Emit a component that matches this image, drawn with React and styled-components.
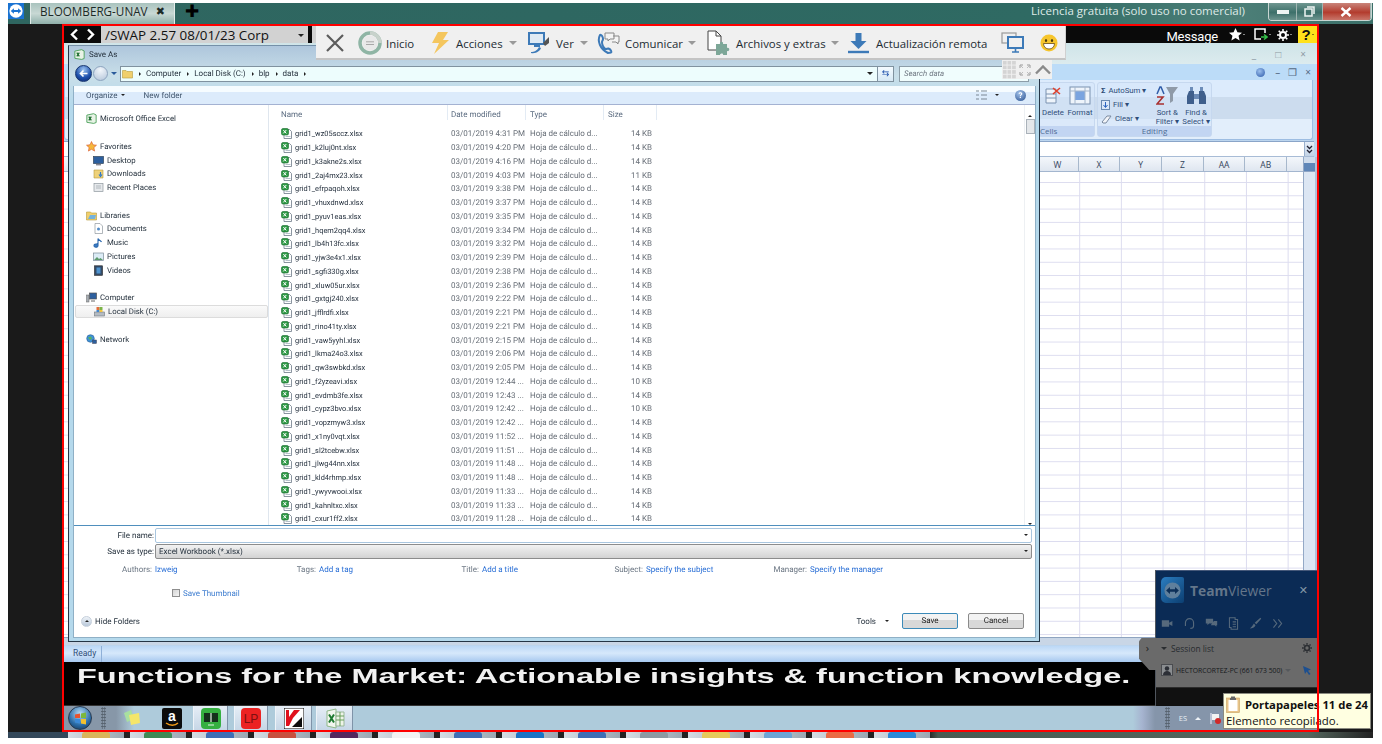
import React from 'react';
import styled, { createGlobalStyle } from 'styled-components';

// --- data ---
const files = [
  ['wz05sccz', '4:31 PM', 14], ['k2luj0nt', '4:20 PM', 14], ['k3akne2s', '4:16 PM', 14], ['2aj4mx23', '4:03 PM', 11],
  ['efrpaqoh', '3:38 PM', 14], ['vhuxdnwd', '3:37 PM', 14], ['pyuv1eas', '3:35 PM', 14], ['hqem2qq4', '3:34 PM', 14],
  ['lb4h13fc', '3:32 PM', 14], ['yjw3e4x1', '2:39 PM', 14], ['sgfi330g', '2:38 PM', 14], ['xluw05ur', '2:36 PM', 14],
  ['gxtgj240', '2:22 PM', 14], ['jfflrdfi', '2:21 PM', 14], ['rino41ty', '2:21 PM', 14], ['vaw5yyhl', '2:15 PM', 14],
  ['lkma24o3', '2:06 PM', 14], ['qw3swbkd', '2:05 PM', 14], ['f2yzeavi', '12:44 ...', 10], ['evdmb3fe', '12:43 ...', 14],
  ['cypz3bvo', '12:42 ...', 10], ['vopzmyw3', '12:42 ...', 14], ['x1ny0vqt', '11:52 ...', 14], ['sl2tcebw', '11:51 ...', 14],
  ['jlwg44nn', '11:48 ...', 14], ['kld4rhmp', '11:48 ...', 14], ['ywyvwooi', '11:33 ...', 14], ['kahnltxc', '11:33 ...', 14],
  ['cxur1ff2', '11:28 ...', 14],
];

const bottomTabs = ['#d9b45a', '#3f8a55', '#3f6fb5', '#c8503f', '#54285e', '#f2f2f2', '#3f6fb5', '#1b74c4', '#3f6fb5', '#8d9aa2', '#e6c95a', '#6ea5d4', '#ea6b45', '#2b8ad8'];
const columns = ['W', 'X', 'Y', 'Z', 'AA', 'AB'];

// --- global ---
const Global = createGlobalStyle`
  html, body { margin: 0; background: #fff; overflow: hidden; }
  * { box-sizing: border-box; }
  body { font-family: "Open Sans", "Liberation Sans", sans-serif; }
`;

// --- outer remote window ---
const Screen = styled.div`
  position: relative;
  margin: 3px 0 0 8px;
  width: 1365px;
  height: 735px;
  background: #1a1a1a;
  display: flex;
  flex-direction: column;
`;

const TitleBar = styled.div`
  height: 21px;
  flex: none;
  display: flex;
  align-items: center;
  background: linear-gradient(90deg, #2f6660 0%, #2e6761 40%, #2f6a63 75%, #4d7f78 90%, #3a6f68 100%);
  color: #10201e;
`;

const AppLogo = styled.div`
  width: 16px;
  height: 16px;
  align-self: flex-start;
  background: #1a73d2;
  display: flex;
  align-items: center;
  justify-content: center;
`;

const SessionTab = styled.div`
  margin-left: 6px;
  width: 145px;
  height: 21px;
  padding: 0 0 5px 9px;
  display: flex;
  align-items: center;
  justify-content: space-between;
  background: linear-gradient(180deg, #a9c3be, #c8d8d4 50%, #8fb0aa);
  border-left: 1px solid #e3ecea;
  border-right: 1px solid #e3ecea;
  color: #1c2a28;
  font-size: 11.7px;
`;

const TabClose = styled.span`
  font-family: "DejaVu Sans", sans-serif;
  font-weight: 700;
  font-size: 11px;
  margin-right: 9px;
`;

const NewTab = styled.span`
  margin: 0 0 5px 10px;
  font-family: "DejaVu Sans", sans-serif;
  font-weight: 700;
  font-size: 17px;
  color: #000;
`;

const LicenseText = styled.span`
  margin: 0 0 7px auto;
  color: #dfeae8;
  font-size: 11.5px;
  white-space: nowrap;
`;

const WindowButtons = styled.div`
  margin: 0 1px 0 23px;
  width: 104px;
  height: 18px;
  display: flex;
  align-self: flex-start;
  border: 1px solid #c8d6d3;
  border-top: 0;
  border-radius: 0 0 4px 4px;
  overflow: hidden;
`;

const WinButton = styled.div`
  width: ${p => p.$w}px;
  display: flex;
  align-items: center;
  justify-content: center;
  border-right: 1px solid #9fb5b1;
  background: ${p => p.$close ? 'linear-gradient(180deg, #c9847a, #b33c2e 55%, #c9766a)' : 'linear-gradient(180deg, #6f9690, #3d706a 55%, #6b938d)'};
  color: #fff;
`;

const FrameRow = styled.div`
  height: 708px;
  flex: none;
  padding-left: 54px;
`;

const Frame = styled.div`
  position: relative;
  width: 1257px;
  height: 708px;
  border: 2px solid #fe0000;
  display: flex;
  flex-direction: column;
`;

// --- bloomberg bar ---
const BbgBar = styled.div`
  height: 17px;
  flex: none;
  background: #0a0a0a;
  display: flex;
  align-items: center;
  color: #fff;
`;

const NavArrows = styled.div`
  width: 37px;
  display: flex;
  justify-content: space-around;
  padding: 0 3px;
`;

const CommandBox = styled.div`
  width: 207px;
  height: 17px;
  padding: 2px 4px 0;
  background: #d2d2d2;
  color: #111;
  font-size: 13.4px;
  line-height: 15px;
  display: flex;
  justify-content: space-between;
  align-items: center;
  white-space: nowrap;
  overflow: hidden;
`;

const SmallCaret = styled.span`
  width: 0;
  height: 0;
  border: ${p => p.$s || 3}px solid transparent;
  border-top-color: ${p => p.$c || '#222'};
  border-bottom-width: 0;
  flex: none;
`;

const SecondBox = styled(CommandBox)`
  width: 20px;
  margin-left: 4px;
`;

const BbgRight = styled.div`
  margin-left: auto;
  display: flex;
  align-items: center;
  height: 17px;
`;

const MessageLabel = styled.span`
  font-family: Roboto, sans-serif;
  font-size: 13px;
  letter-spacing: -0.2px;
  margin: 3px 11px 0 0;
`;

const BbgIcon = styled.div`
  width: ${p => p.$w}px;
  display: flex;
  align-items: center;
  gap: 1px;
`;

const HelpButton = styled.div`
  width: 19px;
  height: 17px;
  background: #ffe11a;
  color: #111;
  font-family: "Liberation Sans", sans-serif;
  font-weight: 700;
  font-size: 15px;
  display: flex;
  align-items: center;
  justify-content: center;
  gap: 1px;
`;

// --- excel behind the dialog ---
const ExcelWindow = styled.div`
  flex: 1;
  min-height: 0;
  display: flex;
  flex-direction: column;
  background: #bcd5ee;
`;

const ExcelTitle = styled.div`
  height: 21px;
  flex: none;
  display: flex;
  justify-content: flex-end;
  gap: 19px;
  padding: 4px 11px 0 0;
  background: linear-gradient(180deg, #cfe4e8, #dcebee);
  color: #8d9aa4;
  font-size: 10px;
`;

const RibbonTabs = styled.div`
  height: 16px;
  flex: none;
  display: flex;
  justify-content: flex-end;
  align-items: center;
  gap: 8px;
  padding-right: 6px;
  background: #bcdcf8;
  color: #556a85;
  font-size: 10px;
`;

const HelpDot = styled.span`
  width: 9px;
  height: 9px;
  border-radius: 50%;
  background: radial-gradient(circle at 40% 35%, #9cc0ee, #2a58a8);
  margin-right: 2px;
`;

const Ribbon = styled.div`
  height: 60px;
  flex: none;
  margin-right: 4px;
  padding: 2px 0 0 973px;
  display: flex;
  gap: 2px;
  background: linear-gradient(180deg, #dcebfc 0 28%, #ccdcee 28% 66%, #e2eefb 66%);
  border: 1px solid #9dbde2;
  border-top: 0;
  border-radius: 0 0 3px 3px;
`;

const RibbonGroup = styled.div`
  width: ${p => p.$w}px;
  height: 55px;
  display: flex;
  flex-direction: column;
  border-radius: 3px;
  background: rgba(214, 230, 250, 0.55);
  border: 1px solid #c6d8ef;
`;

const GroupBody = styled.div`
  flex: 1;
  display: flex;
  gap: 5px;
  padding: 3px 3px 0;
`;

const GroupLabel = styled.div`
  height: 10px;
  background: #c2d5f2;
  color: #4f6d95;
  font-size: 8px;
  line-height: 10px;
  text-align: ${p => p.$left ? 'left' : 'center'};
  padding-left: ${p => p.$left ? '1px' : '0'};
`;

const BigTool = styled.div`
  width: ${p => p.$w || 22}px;
  display: flex;
  flex-direction: column;
  align-items: center;
  color: #2f4d78;
  font-family: Roboto, sans-serif;
  font-size: 7.8px;
  line-height: 9px;
  text-align: center;
  white-space: nowrap;
  gap: 3px;
`;

const SmallTools = styled.div`
  width: 52px;
  display: flex;
  flex-direction: column;
  gap: 4px;
  color: #2f4d78;
  font-family: Roboto, sans-serif;
  font-size: 7.8px;
  line-height: 10px;
`;

const SmallTool = styled.div`
  display: flex;
  align-items: center;
  gap: 3px;
  white-space: nowrap;
`;

const FormulaBar = styled.div`
  height: 16px;
  flex: none;
  margin: 1px 3px 0 0;
  display: flex;
  justify-content: flex-end;
  background: #fff;
  border-top: 1px solid #8aa5c8;
  border-bottom: 1px solid #a8bcd6;
`;

const FormulaToggle = styled.div`
  width: 10px;
  display: flex;
  align-items: center;
  justify-content: center;
  background: linear-gradient(180deg, #e6eef8, #c3d3e6);
  border-left: 1px solid #9ab0cc;
`;

const SheetRow = styled.div`
  flex: 1;
  min-height: 0;
  display: flex;
  background: #fff;
`;

const Sheet = styled.div`
  flex: 1;
  display: flex;
  flex-direction: column;
  min-width: 0;
`;

const ColumnHeader = styled.div`
  height: 15px;
  flex: none;
  padding-left: 973px;
  display: flex;
  background: linear-gradient(180deg, #f4f7fb, #dfe6f0);
  border-bottom: 1px solid #a3b6cf;
`;

const ColumnCell = styled.div`
  width: 41.7px;
  border-right: 1px solid #a7b8cc;
  text-align: center;
  color: #33445c;
  font-size: 8.5px;
  line-height: 15px;
`;

const Cells = styled.div`
  flex: 1;
  background-color: #fff;
  background-image:
    linear-gradient(90deg, #dcdcef 1px, transparent 1px),
    linear-gradient(180deg, #dcdcef 1px, transparent 1px);
  background-size: 41.7px 13.3px;
  background-position: 14.7px 10px;
`;

const SheetTabs = styled.div`
  height: 8px;
  flex: none;
  background: #c9d6e6;
  border-top: 1px solid #8ea4c0;
`;

const SheetScroll = styled.div`
  width: 14px;
  flex: none;
  border-left: 1px solid #94a9c6;
  border-right: 2px solid #b0c2da;
  background: #dce6f3;
  display: flex;
  flex-direction: column;
`;

const ScrollCap = styled.div`
  height: 15px;
  background: linear-gradient(180deg, #cfdcec 0 40%, #5f86b8 40% 100%);
  border-bottom: 1px solid #8ca3c4;
`;

const StatusBar = styled.div`
  height: 16px;
  flex: none;
  margin-top: 1px;
  background: linear-gradient(180deg, #bcd8f6, #d6e8fb 45%, #a7c8ef);
  color: #2f4d78;
  font-family: Roboto, sans-serif;
  font-size: 8.5px;
  line-height: 15px;
`;

const StatusCell = styled.span`
  display: inline-block;
  padding: 0 5px 0 9px;
  border-right: 1px solid #8fb0d8;
  height: 16px;
`;

// --- ticker and taskbar ---
const Ticker = styled.div`
  height: 44px;
  flex: none;
  background: #000;
  border-bottom: 1px solid #333;
  color: #f1f1f1;
  font-family: "Liberation Sans", sans-serif;
  font-weight: 700;
  font-size: 20px;
  line-height: 29px;
  padding-left: 13px;
  white-space: nowrap;
  overflow: hidden;
`;

const TickerText = styled.span`
  display: inline-block;
  transform: scaleX(1.625);
  transform-origin: 0 50%;
  filter: blur(0.3px);
`;

const Taskbar = styled.div`
  height: 24px;
  flex: none;
  display: flex;
  align-items: center;
  background: linear-gradient(90deg, #8797a8 0, #8797a8 52px, #aecbdb 70px, #aecbdb 1069px, #a6b4d0 1078px, #8595aa 1091px);
  padding-left: 4px;
  color: #e8eef4;
`;

const Orb = styled.div`
  width: 24px;
  height: 24px;
  border-radius: 50%;
  flex: none;
  border: 1px solid #283a50;
  background: radial-gradient(circle at 50% 30%, #b8dcf5, #2a6ca8 60%, #16304c);
  display: flex;
  align-items: center;
  justify-content: center;
`;

const Grip = styled.div`
  width: 5px;
  height: 22px;
  flex: none;
  margin-left: ${p => p.$ml}px;
  background-image: radial-gradient(#55606c 0.8px, transparent 1px);
  background-size: 2.5px 3px;
`;

const TaskSlot = styled.div`
  width: ${p => p.$w}px;
  height: 24px;
  flex: none;
  margin-left: ${p => p.$ml || 0}px;
  display: flex;
  align-items: center;
  justify-content: center;
  background: ${p => p.$on ? 'linear-gradient(180deg, #e6eef6, #c6d6e6)' : 'transparent'};
  border-left: ${p => p.$on ? '1px solid #eef3f8' : '0'};
  border-right: ${p => p.$on ? '1px solid #7f93a8' : '0'};
`;

const TrayText = styled.span`
  margin-left: 9px;
  font-size: 7.5px;
`;

const TrayUp = styled.span`
  margin-left: 8px;
  width: 0;
  height: 0;
  border: 3.5px solid transparent;
  border-bottom-color: #eef2f6;
  border-top-width: 0;
`;

const TrayFlag = styled.div`
  margin-left: 8px;
  display: flex;
`;

const TaskFill = styled.div`
  flex: 1;
`;

const BottomStrip = styled.div`
  height: 6px;
  flex: none;
  overflow: hidden;
  padding-left: 60px;
  display: flex;
  gap: 6px;
  background: linear-gradient(90deg, #33485a 0 60px, #222 60px 920px, #4a5c52 930px, #56685f 1300px, #222);
`;

const StripTab = styled.div`
  width: 56px;
  flex: none;
  display: flex;
  justify-content: center;
  background: linear-gradient(90deg, #d5dde4, #9aa7b2);
  &::before {
    content: '';
    width: 28px;
    height: 6px;
    border-radius: 3px 3px 0 0;
    background: ${p => p.$c};
  }
`;

// --- save as dialog ---
const Dialog = styled.div`
  position: absolute;
  left: 4px;
  top: 19px;
  width: 972px;
  height: 597px;
  padding: 0 3px 3px 4px;
  display: flex;
  flex-direction: column;
  background: linear-gradient(180deg, #aec6dc 0, #c9dfe9 30px, #b5d9ec 60px);
  border: 1px solid #253545;
  border-top-color: #7590a8;
  font-family: Roboto, sans-serif;
  text-rendering: geometricPrecision;
  filter: blur(0.25px);
  z-index: 2;
`;

const DialogTitle = styled.div`
  height: 17px;
  flex: none;
  display: flex;
  align-items: center;
  gap: 4px;
  padding-left: 1px;
  color: #26323e;
  font-size: 8px;
`;

const AddressRow = styled.div`
  height: 21px;
  flex: none;
  display: flex;
  align-items: center;
`;

const NavButton = styled.div`
  width: ${p => p.$s}px;
  height: ${p => p.$s}px;
  margin-left: ${p => p.$ml || 0}px;
  flex: none;
  border-radius: 50%;
  border: 1px solid ${p => p.$on ? '#17356f' : '#8da4bf'};
  background: ${p => p.$on ? 'radial-gradient(circle at 50% 25%, #9cc4f2, #1c4eaa 60%, #102c70)' : 'radial-gradient(circle at 50% 25%, #f2f6fb, #b2c4d9)'};
  display: flex;
  align-items: center;
  justify-content: center;
  color: #fff;
`;

const HistoryCaret = styled(SmallCaret)`
  margin-left: 3px;
`;

const AddressField = styled.div`
  margin-left: 3px;
  width: 758px;
  height: 16px;
  padding: 0 4px 0 1px;
  display: flex;
  align-items: center;
  gap: 5px;
  background: #edfdfd;
  border: 1px solid #80929f;
  color: #26323e;
  font-size: 8px;
  white-space: nowrap;
`;

const Crumb = styled.span`
  width: 0;
  height: 0;
  border: 2.5px solid transparent;
  border-left-color: #222;
  border-right-width: 0;
  margin-left: 1px;
`;

const CaretEnd = styled(SmallCaret)`
  margin-left: auto;
`;

const RefreshButton = styled.div`
  width: 16px;
  height: 16px;
  background: linear-gradient(180deg, #f4fbff, #d6e8f4);
  border: 1px solid #80929f;
  border-left: 0;
  display: flex;
  align-items: center;
  justify-content: center;
  color: #1c4eaa;
  font-size: 9px;
`;

const SearchField = styled.div`
  margin-left: 5px;
  width: 130px;
  height: 16px;
  padding-left: 4px;
  background: #f0fdfd;
  border: 1px solid #8c9da8;
  font-style: italic;
  color: #6d7680;
  font-size: 7.8px;
  line-height: 14px;
`;

const Client = styled.div`
  flex: 1;
  min-height: 0;
  margin-top: 2px;
  background: #fff;
  display: flex;
  flex-direction: column;
  border: 1px solid #8fb0c6;
  border-top: 0;
`;

const DialogToolbar = styled.div`
  height: 19px;
  flex: none;
  padding: 0 9px 0 12px;
  display: flex;
  align-items: center;
  gap: 19px;
  background: linear-gradient(180deg, #f6fcff 0 35%, #dcebfb 35%);
  border-bottom: 1px solid #a4b2d2;
  color: #41566e;
  font-size: 8px;
`;

const OrganizeLabel = styled.span`
  display: flex;
  align-items: center;
  gap: 3px;
`;

const ViewIcons = styled.div`
  margin-left: auto;
  display: flex;
  align-items: center;
  gap: 8px;
`;

const HelpIcon = styled.span`
  width: 11px;
  height: 11px;
  margin-left: 8px;
  border-radius: 50%;
  background: radial-gradient(circle at 40% 30%, #a2c2ea, #29508f);
  color: #fff;
  font-size: 8px;
  font-weight: 700;
  line-height: 11px;
  text-align: center;
`;

const BrowseArea = styled.div`
  flex: 1;
  min-height: 0;
  display: flex;
  border-bottom: 1px solid #4f8fbd;
`;

const Sidebar = styled.div`
  width: 195px;
  flex: none;
  padding: 7px 0 0 1px;
  border-right: 1px solid #dfe6ee;
  display: flex;
  flex-direction: column;
  gap: 14px;
`;

const SideGroup = styled.div`
  display: flex;
  flex-direction: column;
`;

const SideItem = styled.div`
  height: 13.7px;
  padding-left: ${p => p.$sub ? 18 : 11}px;
  display: flex;
  align-items: center;
  gap: 3px;
  color: #26323e;
  font-size: 7.8px;
  white-space: nowrap;
  border: ${p => p.$sel ? '1px solid #dcdcdc' : '0'};
  border-radius: 2px;
  background: ${p => p.$sel ? 'linear-gradient(180deg, #fafafa, #efefef)' : 'transparent'};
`;

const FileArea = styled.div`
  flex: 1;
  min-width: 0;
  position: relative;
  display: flex;
`;

const FilePane = styled.div`
  flex: 1;
  min-width: 0;
  padding-left: 12px;
  overflow: hidden;
`;

const HeaderRow = styled.div`
  height: 15px;
  display: flex;
  color: #5c6c80;
  font-size: 8px;
  line-height: 20px;
  margin-bottom: 7px;
`;

const HeaderCell = styled.div`
  width: ${p => p.$w}px;
  padding-left: ${p => p.$pl || 0}px;
  height: 15px;
  border-right: 1px solid #e3ebf4;
`;

const FileRow = styled.div`
  height: 13.75px;
  display: flex;
  align-items: center;
  font-size: 8px;
  color: #666d76;
  white-space: nowrap;
`;

const FileName = styled.div`
  width: 170px;
  display: flex;
  align-items: center;
  gap: 3px;
  color: #1e2a38;
  font-size: 7.4px;
`;

const FileCol = styled.div`
  width: ${p => p.$w}px;
  text-align: ${p => p.$right ? 'right' : 'left'};
`;

const FileScroll = styled.div`
  width: 11px;
  flex: none;
  padding-top: 10px;
  background: #fff;
  border-left: 1px solid #edf0f3;
  display: flex;
  flex-direction: column;
  align-items: center;
  justify-content: space-between;
`;

const ScrollThumb = styled.div`
  width: 9px;
  height: 15px;
  margin-bottom: auto;
  margin-top: 2px;
  background: #e4e7ea;
  border: 1px solid #aab2ba;
`;

const UpCaret = styled.span`
  width: 0;
  height: 0;
  border: 2.5px solid transparent;
  border-bottom-color: #222;
  border-top-width: 0;
`;

const SaveForm = styled.div`
  height: 111px;
  flex: none;
  padding: 1px 3px 0 0;
  display: flex;
  flex-direction: column;
`;

const FormRow = styled.div`
  height: 16px;
  flex: none;
  display: flex;
  align-items: center;
  font-size: 8px;
  color: #26323e;
`;

const FormLabel = styled.div`
  width: 81px;
  text-align: right;
  padding-right: 1px;
  white-space: nowrap;
`;

const NameInput = styled.div`
  flex: 1;
  height: 15px;
  padding: 0 3px;
  display: flex;
  align-items: center;
  background: ${p => p.$select ? 'linear-gradient(180deg, #f2f2f2, #d3d3d3)' : '#fff'};
  border: 1px solid ${p => p.$select ? '#8c8c8c' : '#a9c6df'};
  border-radius: 2px;
`;

const MetaRow = styled.div`
  margin-top: 3px;
  height: 14px;
  flex: none;
  display: flex;
  align-items: center;
  font-size: 8px;
  color: #6b7683;
  white-space: nowrap;
`;

const MetaItem = styled.div`
  width: ${p => p.$w}px;
  text-align: right;
  padding-right: 3px;
`;

const MetaLink = styled.div`
  width: ${p => p.$w}px;
  color: #2a6fd6;
`;

const ThumbRow = styled.div`
  margin-top: 10px;
  padding-left: 98px;
  height: 14px;
  flex: none;
  display: flex;
  align-items: center;
  gap: 3px;
  font-size: 8px;
  color: #3f7ed0;
`;

const ThumbBox = styled.span`
  width: 8px;
  height: 8px;
  background: linear-gradient(135deg, #d4d4d4, #f4f4f4);
  border: 1px solid #8e8e8e;
`;

const ActionRow = styled.div`
  margin-top: auto;
  height: 24px;
  flex: none;
  padding: 0 8px 8px 7px;
  display: flex;
  align-items: center;
  font-size: 8px;
  color: #26323e;
`;

const HideButton = styled.span`
  width: 11px;
  height: 11px;
  margin-right: 3px;
  border-radius: 50%;
  background: linear-gradient(180deg, #eef3f8, #b9c8da);
  border: 1px solid #c6d0dc;
  display: flex;
  align-items: center;
  justify-content: center;
`;

const ToolsLabel = styled.span`
  margin-left: auto;
  display: flex;
  align-items: center;
  gap: 9px;
  margin-right: 13px;
`;

const DialogButton = styled.div`
  width: 56px;
  height: 16px;
  margin-left: ${p => p.$ml || 0}px;
  text-align: center;
  line-height: 14px;
  border-radius: 2px;
  border: 1px solid ${p => p.$primary ? '#3c8ab8' : '#8a8a8a'};
  background: linear-gradient(180deg, #f3f3f3 0 45%, #d8d8d8 45%);
  color: #222;
`;

// --- teamviewer floating toolbar ---
const TvToolbar = styled.div`
  position: absolute;
  left: 252px;
  top: 0;
  width: 750px;
  height: 34px;
  padding-top: 2px;
  display: flex;
  align-items: center;
  background: #f0f0f0;
  border-right: 1px solid #d0d0d0;
  border-bottom: 2px solid #c4c4c4;
  color: #222c33;
  font-size: 11.4px;
  z-index: 3;
`;

const ToolItem = styled.div`
  width: ${p => p.$w}px;
  flex: none;
  padding-left: ${p => p.$pl || 0}px;
  display: flex;
  align-items: center;
  gap: ${p => p.$gap || 5}px;
  white-space: nowrap;
`;

const TvTab = styled.div`
  position: absolute;
  left: 938px;
  top: 34px;
  width: 50px;
  height: 19px;
  display: flex;
  align-items: center;
  background: #f0f0f0;
  z-index: 3;
`;

const TvGrip = styled.div`
  width: 14px;
  height: 19px;
  background-color: #d4d4d4;
  background-image:
    linear-gradient(90deg, #f0f0f0 1px, transparent 1px),
    linear-gradient(180deg, #f0f0f0 1px, transparent 1px);
  background-size: 4.6px 4.6px;
`;

const TvTabIcon = styled.div`
  width: 18px;
  display: flex;
  justify-content: center;
`;

// --- teamviewer panel ---
const TvPanel = styled.div`
  position: absolute;
  left: 1091px;
  top: 544px;
  width: 162px;
  height: 136px;
  display: flex;
  flex-direction: column;
  border-left: 1px solid #50565e;
  z-index: 3;
`;

const PanelHead = styled.div`
  height: 68px;
  flex: none;
  padding: 5px 9px 0 5px;
  background: #0b2b55;
  border-top: 1px solid #46597a;
`;

const PanelBrand = styled.div`
  display: flex;
  align-items: center;
  height: 28px;
  color: #64768a;
  font-size: 13.8px;
`;

const BrandLogo = styled.div`
  width: 23px;
  height: 26px;
  margin-right: 6px;
  background: linear-gradient(135deg, #2b7dc0, #0c3f72);
  border-radius: 5px 2px 2px 5px;
  display: flex;
  align-items: center;
  justify-content: center;
`;

const BrandBold = styled.span`
  font-weight: 700;
`;

const BrandClose = styled.span`
  margin-left: auto;
  font-family: "DejaVu Sans", sans-serif;
  font-weight: 700;
  font-size: 11px;
  color: #8497a8;
`;

const PanelIcons = styled.div`
  margin-top: 13px;
  display: flex;
  align-items: center;
  gap: 9px;
  color: #56697c;
`;

const PanelBody = styled.div`
  height: 49px;
  flex: none;
  position: relative;
  padding: 3px 5px 0 5px;
  background: #6a6a6a;
  color: #1d2125;
`;

const PanelHandle = styled.div`
  position: absolute;
  left: -17px;
  top: 0;
  width: 17px;
  height: 32px;
  background: #6a6a6a;
  clip-path: polygon(15% 0, 100% 0, 100% 100%, 60% 100%, 0 65%, 0 10%);
  color: #222;
  font-size: 11px;
  line-height: 20px;
  text-align: center;
`;

const SessionHead = styled.div`
  height: 14px;
  display: flex;
  align-items: center;
  gap: 4px;
  font-size: 8.4px;
  color: #272b2f;
`;

const SessionRow = styled.div`
  margin-top: 8px;
  height: 14px;
  display: flex;
  align-items: center;
  gap: 3px;
  font-size: 6.8px;
  white-space: nowrap;
  color: #15181b;
`;

const Avatar = styled.div`
  width: 12px;
  height: 12px;
  flex: none;
  background: #8a8d90;
  border: 1px solid #4a4c50;
  display: flex;
  align-items: flex-end;
  justify-content: center;
`;

const PushRight = styled.span`
  margin-left: auto;
  display: flex;
`;

const PanelFoot = styled.div`
  flex: 1;
  background: #111;
  border-top: 1px solid #2c2c2c;
`;

// --- clipboard tooltip ---
const Tooltip = styled.div`
  position: absolute;
  left: 1159px;
  top: 667px;
  width: 148px;
  height: 36px;
  padding: 2px 0 0 2px;
  background: #ffffe1;
  border: 1px solid #8a8a80;
  color: #111;
  font-size: 11.4px;
  line-height: 15px;
  white-space: nowrap;
  z-index: 4;
`;

const TipEdge = styled.span`
  position: absolute;
  left: 93px;
  top: -1px;
  bottom: -4px;
  width: 2px;
  background: #fe0000;
`;

const TipHead = styled.div`
  display: flex;
  align-items: center;
  gap: 5px;
  font-weight: 700;
  font-size: 11.3px;
  height: 17px;
`;

// --- drawings ---
const XlsIcon = () => (
  <svg width="11" height="11" viewBox="0 0 11 11" style={{ flex: 'none' }}>
    <path d="M3 1.5h5.5l2 2v7H3z" fill="#fff" stroke="#6d7a88" strokeWidth=".8" />
    <rect x=".5" y=".5" width="7" height="6.5" rx="1.5" fill="#2f9a46" stroke="#176a2c" strokeWidth=".6" />
    <path d="M2.300 2l3 3.400M5.300 2l-3 3.400" stroke="#fff" strokeWidth="1" />
    <path d="M4.500 8.500h5" stroke="#97a6b5" strokeWidth=".7" />
  </svg>
);

const ExcelMark = ({ size = 13 }) => (
  <svg width={size} height={size} viewBox="0 0 13 13" style={{ flex: 'none' }}>
    <path d="M1 2.500L9 .8l3 1.500v9l-3 1L1 11z" fill="#e8f3e6" stroke="#3f9a50" strokeWidth="1" />
    <path d="M3.300 4.200l3 4.600M6.300 4.200l-3 4.600" stroke="#1a6a2c" strokeWidth="1.400" />
  </svg>
);

const FolderIcon = ({ c = '#f0cf6c' }) => (
  <svg width="11" height="11" viewBox="0 0 11 11" style={{ flex: 'none' }}>
    <path d="M.5 2.500h3.500l1 1h5.500v6.500H.5z" fill={c} stroke="#b79a3c" strokeWidth=".6" />
  </svg>
);

const sideIcons = {
  star: <path d="M5.500.5l1.500 3.300 3.500.4-2.600 2.400.7 3.500-3.100-1.800-3.100 1.800.7-3.500L.5 4.200 4 3.800z" fill="#f5b73c" stroke="#d9542a" strokeWidth=".6" />,
  desktop: <><rect x=".5" y="1.500" width="10" height="7" fill="#2d5f9e" stroke="#33475c" strokeWidth=".7" /><path d="M3 9.800h5" stroke="#556" /></>,
  down: <><path d="M1 2h9v8H1z" fill="#efd27a" stroke="#b79a3c" strokeWidth=".6" /><path d="M7.500 4v3M6 6.500l1.500 2 1.500-2" stroke="#2f78c8" strokeWidth="1.200" fill="none" /></>,
  recent: <><rect x="1" y="1.500" width="9" height="8" fill="#e6e9ec" stroke="#8f989f" strokeWidth=".7" /><path d="M3 4h5M3 6h5" stroke="#9aa3ab" strokeWidth=".7" /></>,
  library: <><path d="M.5 2h4l1 1h5v7H.5z" fill="#f0cf6c" stroke="#b79a3c" strokeWidth=".6" /><path d="M2 9l2-4h6l-1 4z" fill="#74b2dc" /></>,
  docs: <><path d="M2 .5h5l2.500 2.500v7.500H2z" fill="#fff" stroke="#8f989f" strokeWidth=".7" /><circle cx="5.500" cy="6" r="1.500" fill="#4f8ac6" /></>,
  music: <path d="M5 1.500c1 2 3 2 3.500 3.500M5 1.500V8.500a2 1.600 0 1 1-1.500-1.500 2 2 0 0 1 1.500 0" fill="#3a7cc4" stroke="#2b68ae" strokeWidth="1.100" />,
  pictures: <><rect x=".5" y="2" width="10" height="7.500" fill="#dcecf6" stroke="#7a8a96" strokeWidth=".7" /><path d="M1 9l3-3 2 2 1.500-1L10 9z" fill="#5c9a6c" /></>,
  videos: <><rect x="1.500" y=".8" width="8" height="9.500" fill="#334a66" stroke="#222" strokeWidth=".6" /><rect x="3.500" y="2.500" width="4" height="6" fill="#4f93cf" /></>,
  computer: <><rect x="3.500" y="1" width="7" height="6" fill="#2d5f9e" stroke="#555" strokeWidth=".7" /><rect x=".5" y="3" width="2.500" height="7" fill="#a6adb4" stroke="#666" strokeWidth=".5" /><path d="M5 9h4" stroke="#666" /></>,
  disk: <><rect x=".5" y="6" width="10" height="4" fill="#b4bbc2" stroke="#6f767d" strokeWidth=".6" /><path d="M2.500 1h3v3h-3z" fill="#e36b3a" /><path d="M5.500 1h3v3h-3z" fill="#7cb446" /><path d="M2.500 4h3v2h-3z" fill="#3f86d2" /><path d="M5.500 4h3v2h-3z" fill="#f2c53c" /></>,
  network: <><circle cx="4.500" cy="4.500" r="3.800" fill="#3f92d6" stroke="#2a6098" strokeWidth=".6" /><path d="M2 3.500l3-1 1 2-2 1.500z" fill="#5cb35c" /><rect x="6.500" y="6" width="4" height="3.500" fill="#2d5f9e" stroke="#445" strokeWidth=".5" /></>,
};

const SideIcon = ({ name }) => (
  <svg width="11" height="11" viewBox="0 0 11 11" style={{ flex: 'none' }}>{sideIcons[name]}</svg>
);

const Chevron = ({ dir }) => (
  <svg width="11" height="13" viewBox="0 0 11 13">
    <path d={dir === 'left' ? 'M8 1.500L3 6.500l5 5' : 'M3 1.500l5 5-5 5'} fill="none" stroke="#fff" strokeWidth="2.400" />
  </svg>
);

const InicioIcon = () => (
  <svg width="24" height="24" viewBox="0 0 24 24" style={{ flex: 'none' }}>
    <circle cx="12" cy="12" r="10" fill="none" stroke="#8fb5a5" strokeWidth="3.500" />
    <path d="M12 2a10 10 0 0 1 10 10" fill="none" stroke="#c8d2cb" strokeWidth="3.500" />
    <circle cx="12" cy="12" r="7.500" fill="#e9e9e9" />
    <path d="M8 10.800h8M8 13.500h8" stroke="#a8a8a8" strokeWidth="1" />
  </svg>
);

const BoltIcon = () => (
  <svg width="20" height="24" viewBox="0 0 20 24" style={{ flex: 'none' }}>
    <path d="M8 1h10l-5 8h6L4 23l5-11H2z" fill="#f4c65e" />
  </svg>
);

const VerIcon = () => (
  <svg width="22" height="24" viewBox="0 0 22 24" style={{ flex: 'none' }}>
    <rect x="1" y="2" width="15" height="11" fill="#dfeaf4" stroke="#3d7ab8" strokeWidth="2" />
    <path d="M6 15h6" stroke="#3d7ab8" strokeWidth="2" />
    <path d="M15 12l6-6v6l-4 3z" fill="#555" />
    <path d="M3 21c3 0 6-1 8-5l2 1c-1 3-5 6-10 5z" fill="#3d7ab8" />
  </svg>
);

const CallIcon = () => (
  <svg width="24" height="24" viewBox="0 0 24 24" style={{ flex: 'none' }}>
    <path d="M4 4c-3 6 0 14 8 18l3-.5c1-.6 0-3-2.500-4-1-.3-2 1-3 .5-2-1.500-3.500-4-3.500-7 0-1 1-1.500 1-3S5.500 3 4 4z" fill="none" stroke="#3d7ab8" strokeWidth="2" />
    <path d="M9 2h9v6h-4l-2 2V8H9zM17 5h6v6h-1v2l-2-2h-4" fill="#f4f4f4" stroke="#888" strokeWidth="1" />
  </svg>
);

const ExtrasIcon = () => (
  <svg width="25" height="26" viewBox="0 0 25 26" style={{ flex: 'none' }}>
    <path d="M2 1h8l5 5v14H2z" fill="#fff" stroke="#444" strokeWidth="1" />
    <path d="M10 1v5h5" fill="none" stroke="#444" strokeWidth="1" />
    <path d="M10 14h4c-1-3 4-3 3 0h4v4c3-1 3 4 0 3v4h-4c1-2-3-2-3 0h-4z" fill="#7da798" />
  </svg>
);

const UpdateIcon = () => (
  <svg width="21" height="22" viewBox="0 0 21 22" style={{ flex: 'none' }}>
    <path d="M7.500 1h6v8h5l-8 8-8-8h5z" fill="#3d7ab8" />
    <path d="M0 20h21" stroke="#3d7ab8" strokeWidth="2.400" />
  </svg>
);

const RemoteIcon = () => (
  <svg width="23" height="22" viewBox="0 0 23 22">
    <rect x="1" y="1" width="14" height="10" fill="none" stroke="#9a9a9a" strokeWidth="1.200" />
    <rect x="7" y="5" width="15" height="11" fill="#f0f0f0" stroke="#3d7ab8" strokeWidth="2" />
    <path d="M11 20h7M14.500 16v4" stroke="#3d7ab8" strokeWidth="1.600" />
  </svg>
);

const SmileIcon = () => (
  <svg width="18" height="18" viewBox="0 0 18 18">
    <circle cx="9" cy="9" r="8.500" fill="#f6c52c" />
    <ellipse cx="6" cy="6.500" rx="1.100" ry="1.600" fill="#4a3a10" />
    <ellipse cx="12" cy="6.500" rx="1.100" ry="1.600" fill="#4a3a10" />
    <path d="M3.500 9.500h11c0 3.500-2.500 5.500-5.500 5.500s-5.500-2-5.500-5.500z" fill="#fff" stroke="#6a4a10" strokeWidth=".8" />
  </svg>
);

// round teamviewer mark: a disc with the two way arrow
const TvMark = ({ size = 14, disc = '#fff', arrow = '#1a73d2' }) => (
  <svg width={size} height={size} viewBox="0 0 20 20">
    <circle cx="10" cy="10" r="9.500" fill={disc} />
    <path d="M2.500 10l4.500-4v2.500h6V6l4.500 4-4.500 4v-2.500H7V14z" fill={arrow} />
  </svg>
);

const CloseCross = () => (
  <svg width="18" height="18" viewBox="0 0 18 18">
    <path d="M1 1l16 16M17 1L1 17" stroke="#5c5c5c" strokeWidth="2.200" />
  </svg>
);

const ExpandIcon = () => (
  <svg width="12" height="12" viewBox="0 0 12 12">
    <path d="M1 4V1h3M8 1h3v3M11 8v3H8M4 11H1V8" fill="none" stroke="#9a9a9a" />
    <path d="M2 2l2 2M10 2L8 4M10 10L8 8M2 10l2-2" stroke="#bcbcbc" />
  </svg>
);

const CollapseIcon = () => (
  <svg width="16" height="10" viewBox="0 0 16 10">
    <path d="M1 8.500l7-7 7 7" fill="none" stroke="#8a8a8a" strokeWidth="2.400" />
  </svg>
);

const panelGlyphs = [
  <><rect x="1" y="4" width="9" height="8" fill="currentColor" /><path d="M10 7l4-2v6l-4-2z" fill="currentColor" /></>,
  <path d="M3 9V7a5 5 0 0 1 10 0v2M3 8v3M13 8v3M13 11c0 2-2 3-4 3" fill="none" stroke="currentColor" strokeWidth="1.400" />,
  <path d="M1 2h9v6H5l-2 2V8H1zM11 5h4v5h-1v2l-2-2H7" fill="currentColor" />,
  <path d="M3 1h7v2h3v12H5v-2H3zM7 6h4M7 9h4M7 12h4" fill="none" stroke="currentColor" strokeWidth="1.300" />,
  <path d="M14 1l1 1-6 7-2-2zM6 8l2 2c-1 3-4 4-7 4 2-1 3-3 5-6z" fill="currentColor" />,
  <path d="M3 3l4 5-4 5M9 3l4 5-4 5" fill="none" stroke="currentColor" strokeWidth="1.400" />,
];

const Gear = ({ c = '#fff', s = 12 }) => (
  <svg width={s} height={s} viewBox="0 0 12 12" style={{ flex: 'none' }}>
    <circle cx="6" cy="6" r="3" fill="none" stroke={c} strokeWidth="2" />
    <path d="M6 0v2M6 10v2M0 6h2M10 6h2M1.700 1.700l1.400 1.400M8.900 8.900l1.400 1.400M1.700 10.300l1.400-1.400M8.900 3.100l1.400-1.400" stroke={c} strokeWidth="1.600" />
  </svg>
);

const Cursor = () => (
  <svg width="10" height="11" viewBox="0 0 10 11">
    <path d="M1 1l8 3.500-3 1.200 2.500 3.300-1.500 1-2.300-3.400L3 9z" fill="#1c4f90" />
  </svg>
);

const ClipIcon = () => (
  <svg width="14" height="17" viewBox="0 0 14 17" style={{ flex: 'none' }}>
    <rect x=".5" y="2" width="13" height="14.500" fill="#e8c48a" stroke="#c9a060" strokeWidth=".6" />
    <rect x="2.500" y="4" width="9" height="11" fill="#fff" />
    <path d="M5 2V.5h4V2h1v2H4V2z" fill="#666" />
  </svg>
);

const TaskIcon = ({ children }) => (
  <svg width="20" height="21" viewBox="0 0 20 21">{children}</svg>
);

const ExcelTaskIcon = () => (
  <svg width="21" height="21" viewBox="0 0 21 21">
    <path d="M3 3l9-2v19l-9-2z" fill="#f2f6ee" stroke="#8fb88a" />
    <path d="M12 4h8v14h-8z" fill="#eef4e8" stroke="#9ab89a" />
    <path d="M12 8h8M12 12h8M16 4v14" stroke="#6aa05f" />
    <path d="M5 6.500l5 8M10 6.500l-5 8" stroke="#1f7a30" strokeWidth="2" />
  </svg>
);

const ExcelWindowPart = () => (
  <ExcelWindow>
    <ExcelTitle>
      <span>_</span><span>□</span><span>×</span>
    </ExcelTitle>
    <RibbonTabs>
      <HelpDot /><span>–</span><span>❐</span><span>×</span>
    </RibbonTabs>
    <Ribbon>
      <RibbonGroup $w={57}>
        <GroupBody>
          <BigTool>
            <svg width="20" height="19" viewBox="0 0 20 19"><path d="M3 3h10v14H3zM3 8h10M3 12h10" fill="#eef4fb" stroke="#7a92b0" /><path d="M10 8l7-6M10 2l7 6" stroke="#e0402c" strokeWidth="1.600" /></svg>
            <span>Delete</span>
          </BigTool>
          <BigTool>
            <svg width="22" height="19" viewBox="0 0 22 19"><rect x="1" y="1" width="20" height="17" fill="#eef4fb" stroke="#7a92b0" /><rect x="6" y="5" width="10" height="9" fill="#7aa4e0" /><path d="M1 5h20M6 1v17M16 1v17" stroke="#a4b6cc" /></svg>
            <span>Format</span>
          </BigTool>
        </GroupBody>
        <GroupLabel $left>Cells</GroupLabel>
      </RibbonGroup>
      <RibbonGroup $w={115}>
        <GroupBody>
          <SmallTools>
            <SmallTool><b>Σ</b> AutoSum ▾</SmallTool>
            <SmallTool>
              <svg width="9" height="10" viewBox="0 0 9 10"><rect x=".5" y=".5" width="8" height="9" fill="#dbe8f8" stroke="#6a8ab0" /><path d="M4.500 2v5M2.500 5l2 2.500 2-2.500" stroke="#2a64c0" fill="none" /></svg>
              Fill ▾
            </SmallTool>
            <SmallTool>
              <svg width="11" height="9" viewBox="0 0 11 9"><path d="M1 7l5-6h4L5 8H2z" fill="#f2f4f8" stroke="#7a8aa0" /></svg>
              Clear ▾
            </SmallTool>
          </SmallTools>
          <BigTool $w={24}>
            <svg width="23" height="19" viewBox="0 0 23 19"><path d="M10 1h12l-5 7v7l-3 2V8z" fill="#8f9aa8" /><path d="M1 8l3-7h1l3 7" fill="none" stroke="#2f5ca8" strokeWidth="1.500" /><path d="M1 11h6l-6 7h7" fill="none" stroke="#a83030" strokeWidth="1.600" /></svg>
            <span>Sort &amp;<br />Filter ▾</span>
          </BigTool>
          <BigTool $w={24}>
            <svg width="21" height="19" viewBox="0 0 21 19"><path d="M3 5h5v13H1V10zM13 5h5l2 5v8h-7z" fill="#3f5f8c" /><path d="M8 8h5v5H8zM4 1h3v4H4zM14 1h3v4h-3z" fill="#6c8cb8" /></svg>
            <span>Find &amp;<br />Select ▾</span>
          </BigTool>
        </GroupBody>
        <GroupLabel>Editing</GroupLabel>
      </RibbonGroup>
    </Ribbon>
    <FormulaBar>
      <FormulaToggle>
        <svg width="7" height="9" viewBox="0 0 7 9"><path d="M1 1l2.500 2.500L6 1M1 5l2.500 2.500L6 5" fill="none" stroke="#223" strokeWidth="1.300" /></svg>
      </FormulaToggle>
    </FormulaBar>
    <SheetRow>
      <Sheet>
        <ColumnHeader>
          {columns.map(c => <ColumnCell key={c}>{c}</ColumnCell>)}
        </ColumnHeader>
        <Cells />
        <SheetTabs />
      </Sheet>
      <SheetScroll><ScrollCap /></SheetScroll>
    </SheetRow>
    <StatusBar><StatusCell>Ready</StatusCell></StatusBar>
  </ExcelWindow>
);

const SaveDialog = () => (
  <Dialog>
    <DialogTitle><ExcelMark size={11} />Save As</DialogTitle>
    <AddressRow>
      <NavButton $s={17} $ml={2} $on>
        <svg width="9" height="9" viewBox="0 0 9 9"><path d="M8.500 4.500H2M4.500 1.500l-3 3 3 3" fill="none" stroke="#fff" strokeWidth="1.700" /></svg>
      </NavButton>
      <NavButton $s={15} $ml={1} />
      <HistoryCaret $c="#2a5a9a" />
      <AddressField>
        <FolderIcon />
        <Crumb />
        <span>Computer</span><Crumb />
        <span>Local Disk (C:)</span><Crumb />
        <span>blp</span><Crumb />
        <span>data</span><Crumb />
        <CaretEnd />
      </AddressField>
      <RefreshButton>⇆</RefreshButton>
      <SearchField>Search data</SearchField>
    </AddressRow>
    <Client>
      <DialogToolbar>
        <OrganizeLabel>Organize <SmallCaret $s={2.5} /></OrganizeLabel>
        <span>New folder</span>
        <ViewIcons>
          <svg width="11" height="10" viewBox="0 0 11 10"><path d="M0 1h3M0 5h3M0 9h3M5 1h6M5 5h6M5 9h6" stroke="#7a8796" strokeWidth="1.200" /></svg>
          <SmallCaret $s={2.5} />
          <HelpIcon>?</HelpIcon>
        </ViewIcons>
      </DialogToolbar>
      <BrowseArea>
        <Sidebar>
          <SideGroup>
            <SideItem><ExcelMark size={11} />Microsoft Office Excel</SideItem>
          </SideGroup>
          <SideGroup>
            <SideItem><SideIcon name="star" />Favorites</SideItem>
            <SideItem $sub><SideIcon name="desktop" />Desktop</SideItem>
            <SideItem $sub><SideIcon name="down" />Downloads</SideItem>
            <SideItem $sub><SideIcon name="recent" />Recent Places</SideItem>
          </SideGroup>
          <SideGroup>
            <SideItem><SideIcon name="library" />Libraries</SideItem>
            <SideItem $sub><SideIcon name="docs" />Documents</SideItem>
            <SideItem $sub><SideIcon name="music" />Music</SideItem>
            <SideItem $sub><SideIcon name="pictures" />Pictures</SideItem>
            <SideItem $sub><SideIcon name="videos" />Videos</SideItem>
          </SideGroup>
          <SideGroup>
            <SideItem><SideIcon name="computer" />Computer</SideItem>
            <SideItem $sub $sel><SideIcon name="disk" />Local Disk (C:)</SideItem>
          </SideGroup>
          <SideGroup>
            <SideItem><SideIcon name="network" />Network</SideItem>
          </SideGroup>
        </Sidebar>
        <FileArea>
          <FilePane>
            <HeaderRow>
              <HeaderCell $w={167}>Name</HeaderCell>
              <HeaderCell $w={78} $pl={3}>Date modified</HeaderCell>
              <HeaderCell $w={78} $pl={4}>Type</HeaderCell>
              <HeaderCell $w={53} $pl={4}>Size</HeaderCell>
            </HeaderRow>
            {files.map(([id, time, size]) => (
              <FileRow key={id}>
                <FileName><XlsIcon />grid1_{id}.xlsx</FileName>
                <FileCol $w={79}>03/01/2019 {time}</FileCol>
                <FileCol $w={78}>Hoja de cálculo d...</FileCol>
                <FileCol $w={44} $right>{size} KB</FileCol>
              </FileRow>
            ))}
          </FilePane>
          <FileScroll>
            <UpCaret />
            <ScrollThumb />
            <SmallCaret $s={2.5} />
          </FileScroll>
        </FileArea>
      </BrowseArea>
      <SaveForm>
        <FormRow>
          <FormLabel>File name:</FormLabel>
          <NameInput><CaretEnd $s={2.5} /></NameInput>
        </FormRow>
        <FormRow>
          <FormLabel>Save as type:</FormLabel>
          <NameInput $select>Excel Workbook (*.xlsx)<CaretEnd $s={2.5} /></NameInput>
        </FormRow>
        <MetaRow>
          <MetaItem $w={81}>Authors:</MetaItem>
          <MetaLink $w={118}>lzweig</MetaLink>
          <MetaItem $w={46}>Tags:</MetaItem>
          <MetaLink $w={118}>Add a tag</MetaLink>
          <MetaItem $w={45}>Title:</MetaItem>
          <MetaLink $w={119}>Add a title</MetaLink>
          <MetaItem $w={45}>Subject:</MetaItem>
          <MetaLink $w={119}>Specify the subject</MetaLink>
          <MetaItem $w={45}>Manager:</MetaItem>
          <MetaLink $w={110}>Specify the manager</MetaLink>
        </MetaRow>
        <ThumbRow><ThumbBox />Save Thumbnail</ThumbRow>
        <ActionRow>
          <HideButton><UpCaret /></HideButton>
          Hide Folders
          <ToolsLabel>Tools <SmallCaret $s={2.5} /></ToolsLabel>
          <DialogButton $primary>Save</DialogButton>
          <DialogButton $ml={10}>Cancel</DialogButton>
        </ActionRow>
      </SaveForm>
    </Client>
  </Dialog>
);

export default function App() {
  return (
    <>
      <Global />
      <Screen>
        <TitleBar>
          <AppLogo><TvMark /></AppLogo>
          <SessionTab>BLOOMBERG-UNAV<TabClose>✖</TabClose></SessionTab>
          <NewTab>✚</NewTab>
          <LicenseText>Licencia gratuita (solo uso no comercial)</LicenseText>
          <WindowButtons>
            <WinButton $w={29}>
              <svg width="12" height="4"><rect width="12" height="4" fill="#eef4f2" /></svg>
            </WinButton>
            <WinButton $w={26}>
              <svg width="11" height="11" viewBox="0 0 11 11"><path d="M3 1h7v7M1 3h7v7H1z" fill="none" stroke="#eef4f2" strokeWidth="1.500" /></svg>
            </WinButton>
            <WinButton $w={49} $close>
              <svg width="12" height="10" viewBox="0 0 12 10"><path d="M1.500 1l9 8M10.500 1l-9 8" stroke="#fff" strokeWidth="2.400" /></svg>
            </WinButton>
          </WindowButtons>
        </TitleBar>

        <FrameRow>
          <Frame>
            <BbgBar>
              <NavArrows><Chevron dir="left" /><Chevron dir="right" /></NavArrows>
              <CommandBox>/SWAP 2.57 08/01/23 Corp<SmallCaret /></CommandBox>
              <SecondBox>S</SecondBox>
              <BbgRight>
                <MessageLabel>Message</MessageLabel>
                <BbgIcon $w={25}>
                  <svg width="13" height="13" viewBox="0 0 12 12"><path d="M6 0l1.800 4 4.200.4-3.200 2.800 1 4.300L6 9.200 2.200 11.500l1-4.300L0 4.400 4.200 4z" fill="#fff" /></svg>
                  <SmallCaret $s={1.5} $c="#fff" />
                </BbgIcon>
                <BbgIcon $w={23}>
                  <svg width="14" height="13" viewBox="0 0 14 13"><path d="M7 11H1V1h10v4" fill="none" stroke="#fff" strokeWidth="1.500" /><path d="M7 9h5M10 6.500L13 9l-3 2.500" fill="none" stroke="#35c04a" strokeWidth="1.500" /></svg>
                  <SmallCaret $s={1.5} $c="#fff" />
                </BbgIcon>
                <BbgIcon $w={21}><Gear /><SmallCaret $s={1.5} $c="#fff" /></BbgIcon>
                <HelpButton>?<SmallCaret $s={1.5} $c="#111" /></HelpButton>
              </BbgRight>
            </BbgBar>

            <ExcelWindowPart />

            <Ticker><TickerText>Functions for the Market: Actionable insights &amp; function knowledge.</TickerText></Ticker>

            <Taskbar>
              <Orb>
                <svg width="13" height="13" viewBox="0 0 13 13">
                  <path d="M1 2.500l5-1v4.500H1z" fill="#e8532e" /><path d="M7 1.500l5-1v5.500H7z" fill="#7cb83c" />
                  <path d="M1 7h5v4.500l-5-1z" fill="#3c8ad8" /><path d="M7 7h5v5.500l-5-1z" fill="#f2c02e" />
                </svg>
              </Orb>
              <Grip $ml={9} />
              <TaskSlot $w={26} $ml={13}>
                <TaskIcon><path d="M2 5l7-3 3 9-7 3z" fill="#a8e0a0" /><path d="M7 7l10-2 1 10-9 2z" fill="#f5e66a" /></TaskIcon>
              </TaskSlot>
              <TaskSlot $w={24} $ml={15}>
                <TaskIcon>
                  <rect x="0" y="0" width="20" height="21" rx="2" fill="#0c0c0c" />
                  <text x="10" y="13" textAnchor="middle" fontFamily="Liberation Sans" fontWeight="700" fontSize="14" fill="#fff">a</text>
                  <path d="M4 15c4 3 9 3 12 0" fill="none" stroke="#f29b18" strokeWidth="1.400" />
                </TaskIcon>
              </TaskSlot>
              <TaskSlot $w={35} $ml={9} $on>
                <TaskIcon>
                  <rect width="20" height="21" rx="4" fill="#35b040" />
                  <rect x="3" y="5" width="14" height="9" fill="#15301c" />
                  <path d="M10 5v9M7 17h6" stroke="#e8f4e8" strokeWidth="1.200" />
                </TaskIcon>
              </TaskSlot>
              <TaskSlot $w={34} $ml={6} $on>
                <TaskIcon>
                  <rect width="20" height="21" rx="4" fill="#ec2222" />
                  <text x="10" y="15" textAnchor="middle" fontFamily="Liberation Sans" fontSize="12" fill="#7a1010">LP</text>
                </TaskIcon>
              </TaskSlot>
              <TaskSlot $w={37} $ml={7} $on>
                <TaskIcon>
                  <rect width="20" height="21" fill="#fff" stroke="#000" />
                  <path d="M2 2h3v7l5-7h6L9 10l-4 8H2z" fill="#e0101c" />
                  <path d="M18 9v10H8z" fill="#0c0c0c" />
                </TaskIcon>
              </TaskSlot>
              <TaskSlot $w={37} $ml={4} $on><ExcelTaskIcon /></TaskSlot>
              <TaskFill />
              <Grip $ml={0} />
              <TrayText>ES</TrayText>
              <TrayUp />
              <TrayFlag>
                <svg width="13" height="13" viewBox="0 0 13 13"><path d="M2 1v11" stroke="#eef" /><path d="M3 2h7v6H3z" fill="#f2f2f2" /><circle cx="9" cy="9" r="3" fill="#d02a2a" /></svg>
              </TrayFlag>
              <TaskSlot $w={95} />
            </Taskbar>

            <SaveDialog />

            <TvToolbar>
              <ToolItem $w={42} $pl={10}><CloseCross /></ToolItem>
              <ToolItem $w={72} $gap={4}><InicioIcon />Inicio</ToolItem>
              <ToolItem $w={98} $gap={6}><BoltIcon />Acciones<SmallCaret $s={4} $c="#999" /></ToolItem>
              <ToolItem $w={68} $gap={6}><VerIcon />Ver<SmallCaret $s={4} $c="#999" /></ToolItem>
              <ToolItem $w={110} $gap={5}><CallIcon />Comunicar<SmallCaret $s={4} $c="#999" /></ToolItem>
              <ToolItem $w={142} $gap={5}><ExtrasIcon />Archivos y extras<SmallCaret $s={4} $c="#999" /></ToolItem>
              <ToolItem $w={153} $gap={7}><UpdateIcon />Actualización remota</ToolItem>
              <ToolItem $w={39}><RemoteIcon /></ToolItem>
              <ToolItem $w={20}><SmileIcon /></ToolItem>
            </TvToolbar>
            <TvTab>
              <TvGrip />
              <TvTabIcon><ExpandIcon /></TvTabIcon>
              <TvTabIcon><CollapseIcon /></TvTabIcon>
            </TvTab>

            <TvPanel>
              <PanelHead>
                <PanelBrand>
                  <BrandLogo><TvMark size={17} disc="#5f7f9c" arrow="#0c2f58" /></BrandLogo>
                  <BrandBold>Team</BrandBold>Viewer
                  <BrandClose>✕</BrandClose>
                </PanelBrand>
                <PanelIcons>
                  {panelGlyphs.map((g, i) => (
                    <svg key={i} width="13" height="13" viewBox="0 0 16 16">{g}</svg>
                  ))}
                </PanelIcons>
              </PanelHead>
              <PanelBody>
                <PanelHandle>›</PanelHandle>
                <SessionHead>
                  <SmallCaret $s={3.5} $c="#2a2d30" />Session list
                  <PushRight><Gear c="#2c2f33" s={10} /></PushRight>
                </SessionHead>
                <SessionRow>
                  <Avatar>
                    <svg width="10" height="10" viewBox="0 0 10 10"><circle cx="5" cy="3.500" r="2.200" fill="#2c2f36" /><path d="M1 10c0-3 2-4 4-4s4 1 4 4z" fill="#2c2f36" /></svg>
                  </Avatar>
                  HECTORCORTEZ-PC (661 673 500)
                  <SmallCaret $s={3} $c="#55585c" />
                  <PushRight><Cursor /></PushRight>
                </SessionRow>
              </PanelBody>
              <PanelFoot />
            </TvPanel>

            <Tooltip>
              <TipEdge />
              <TipHead><ClipIcon />Portapapeles 11 de 24</TipHead>
              <div>Elemento recopilado.</div>
            </Tooltip>
          </Frame>
        </FrameRow>

        <BottomStrip>
          {bottomTabs.map((c, i) => <StripTab key={i} $c={c} />)}
        </BottomStrip>
      </Screen>
    </>
  );
}
